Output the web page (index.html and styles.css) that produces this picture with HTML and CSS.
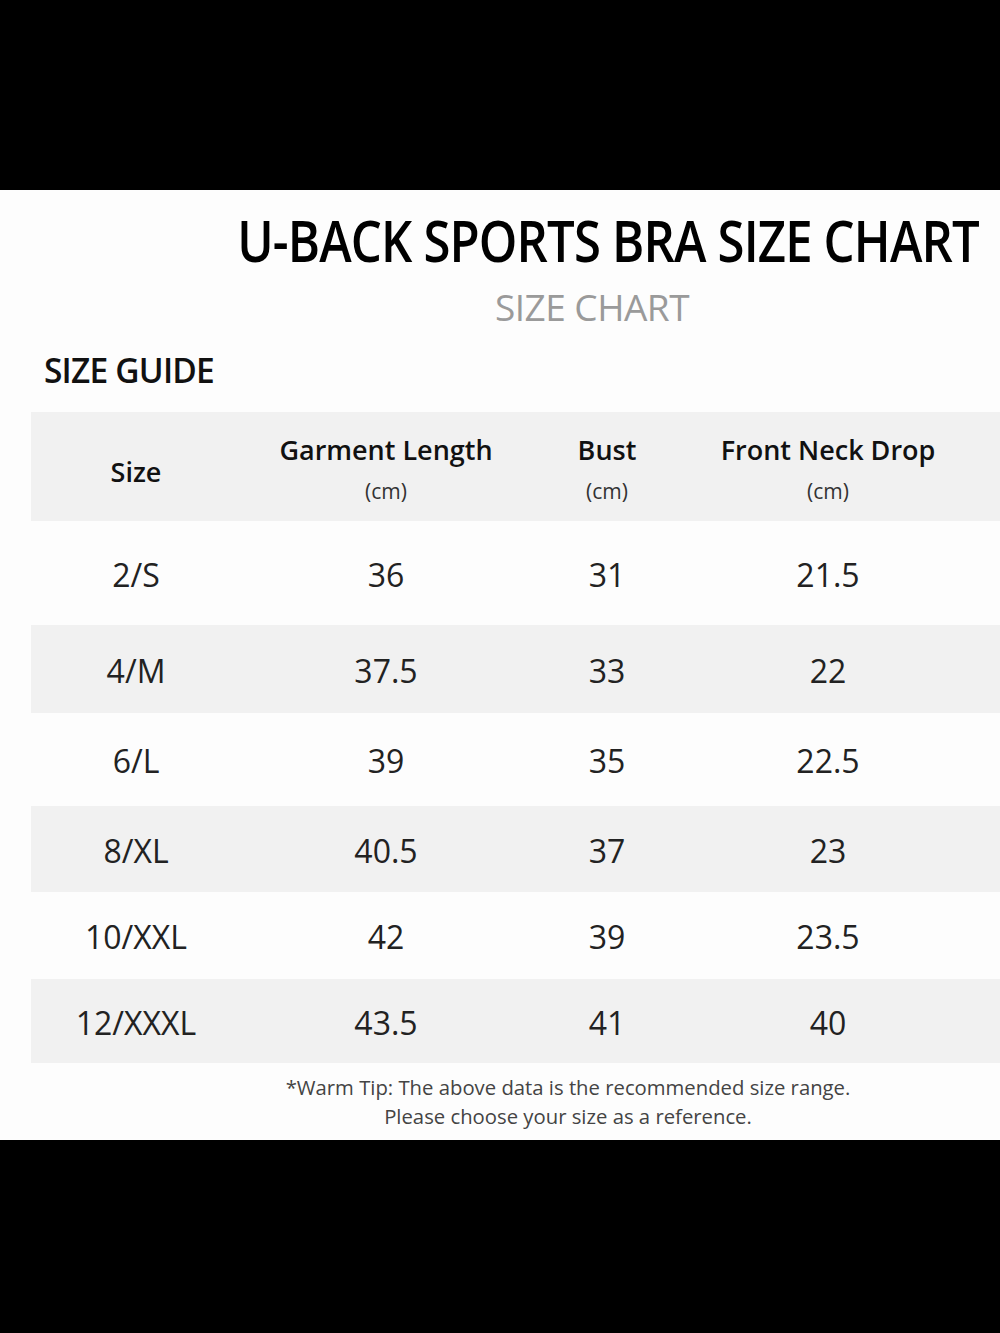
FILE: index.html
```html
<!DOCTYPE html>
<html>
<head>
<meta charset="utf-8">
<link rel="stylesheet" href="styles.css">
</head>
<body>
<div class="band"></div>
<main class="sheet">
  <h1 class="title">U-BACK SPORTS BRA SIZE CHART</h1>
  <h2 class="subtitle">SIZE CHART</h2>
  <h3 class="guide">SIZE GUIDE</h3>
  <div class="table">
    <div class="row head">
      <div class="cell"><span class="h">Size</span></div>
      <div class="cell"><span class="h">Garment Length</span><span class="unit">(cm)</span></div>
      <div class="cell"><span class="h">Bust</span><span class="unit">(cm)</span></div>
      <div class="cell"><span class="h">Front Neck Drop</span><span class="unit">(cm)</span></div>
      <div class="cell"></div>
    </div>
    <div class="row r1"><div class="cell">2/S</div><div class="cell">36</div><div class="cell">31</div><div class="cell">21.5</div><div class="cell"></div></div>
    <div class="row r2 alt"><div class="cell">4/M</div><div class="cell">37.5</div><div class="cell">33</div><div class="cell">22</div><div class="cell"></div></div>
    <div class="row r3"><div class="cell">6/L</div><div class="cell">39</div><div class="cell">35</div><div class="cell">22.5</div><div class="cell"></div></div>
    <div class="row r4 alt"><div class="cell">8/XL</div><div class="cell">40.5</div><div class="cell">37</div><div class="cell">23</div><div class="cell"></div></div>
    <div class="row r5"><div class="cell">10/XXL</div><div class="cell">42</div><div class="cell">39</div><div class="cell">23.5</div><div class="cell"></div></div>
    <div class="row r6 alt"><div class="cell">12/XXXL</div><div class="cell">43.5</div><div class="cell">41</div><div class="cell">40</div><div class="cell"></div></div>
  </div>
  <p class="tip">*Warm Tip: The above data is the recommended size range.<br>Please choose your size as a reference.</p>
</main>
<div class="band bottom"></div>
</body>
</html>
```
FILE: styles.css
```css
html, body {
  margin: 0;
  padding: 0;
  background: #000;
}
body {
  width: 1000px;
  height: 1333px;
  overflow: hidden;
  font-family: "Open Sans", "Noto Sans", sans-serif;
}
.band {
  height: 190px;
  background: #000;
}
.band.bottom {
  height: 193px;
}
.sheet {
  background: #fdfdfd;
  height: 950px;
  display: flex;
  flex-direction: column;
}
.title {
  margin: 0;
  padding: 10px 25px 0 0;
  text-align: right;
  font-weight: 600;
  font-size: 58px;
  line-height: 80px;
  letter-spacing: -1px;
  color: #000;
  white-space: nowrap;
  transform: scaleX(0.846);
  transform-origin: right center;
}
.subtitle {
  margin: 7px 0 0 0;
  padding-left: 184px;
  text-align: center;
  font-weight: 400;
  font-size: 37px;
  line-height: 40px;
  letter-spacing: -0.5px;
  color: #9a9a9a;
}
.guide {
  margin: 0;
  padding: 22px 0 0 44px;
  font-weight: 600;
  font-size: 33.5px;
  line-height: 42px;
  letter-spacing: -0.8px;
  color: #111;
}
.table {
  margin: 21px 0 0 31px;
  display: flex;
  flex-direction: column;
}
.row {
  display: grid;
  grid-template-columns: 210px 290px 152px 290px 27px;
  align-items: center;
}
.row.head, .row.alt {
  background: #f1f1f1;
}
.row.head { height: 109px; }
.r1 { height: 104px; }
.r2 { height: 88px; }
.r3 { height: 93px; }
.r4 { height: 86px; }
.r5 { height: 87px; }
.r6 { height: 84px; }
.cell {
  text-align: center;
  font-size: 32px;
  color: #222;
  display: flex;
  flex-direction: column;
  align-items: center;
  padding-top: 2px;
}
.head .cell {
  padding-top: 10px;
}
.h {
  font-weight: 600;
  font-size: 27px;
  line-height: 38px;
  color: #111;
}
.unit {
  font-size: 21px;
  line-height: 44px;
  color: #333;
}
.tip {
  margin: 10px 0 0 0;
  padding-left: 136px;
  text-align: center;
  font-size: 20.3px;
  line-height: 29px;
  color: #444;
}
```
